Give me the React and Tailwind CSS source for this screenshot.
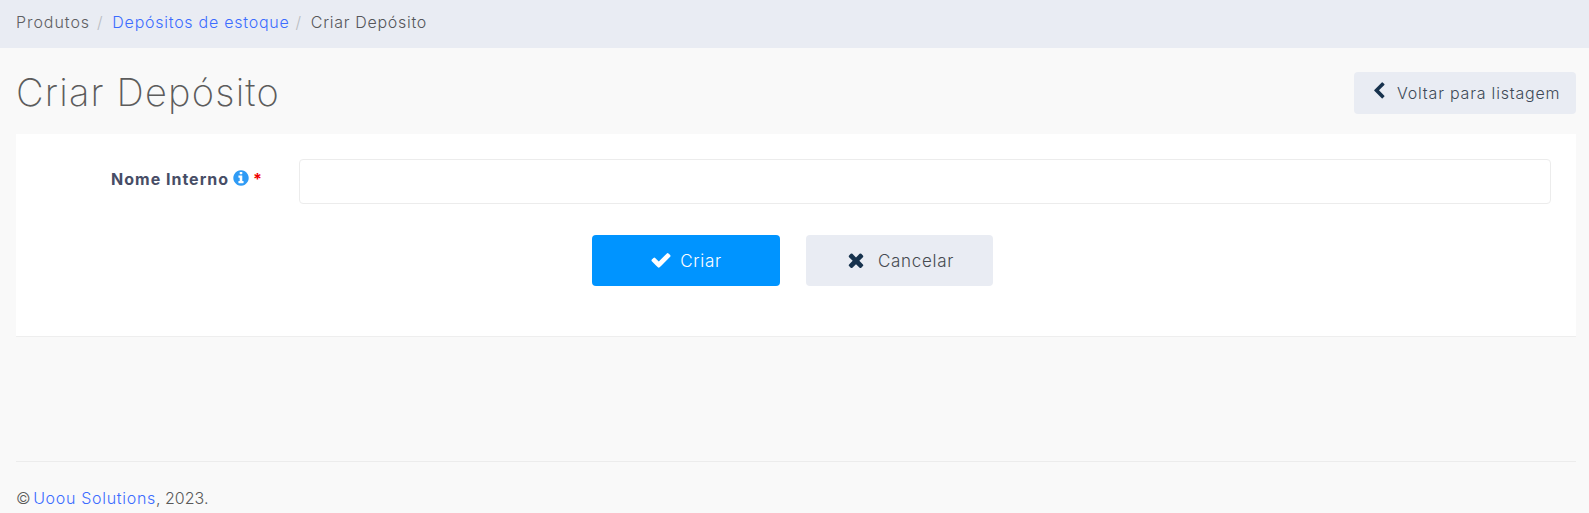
import React from "react";

// font awesome 4 glyphs, the newer sets in react-icons are drawn differently
const Fa4 = ({ d, className }) => (
    <svg viewBox="0 0 1792 1792" fill="currentColor" className={className}>
        <path d={d} />
    </svg>
);

const chevronLeft = "M1427 301l-531 531 531 531q19 19 19 45t-19 45l-166 166q-19 19-45 19t-45-19l-742-742q-19-19-19-45t19-45l742-742q19-19 45-19t45 19l166 166q19 19 19 45t-19 45z";
const check = "M1671 566q0 40-28 68l-724 724-136 136q-28 28-68 28t-68-28l-136-136-362-362q-28-28-28-68t28-68l136-136q28-28 68-28t68 28l294 295 656-657q28-28 68-28t68 28l136 136q28 28 28 68z";
const times = "M1490 1322q0 40-28 68l-136 136q-28 28-68 28t-68-28l-294-294-294 294q-28 28-68 28t-68-28l-136-136q-28-28-28-68t28-68l294-294-294-294q-28-28-28-68t28-68l136-136q28-28 68-28t68 28l294 294 294-294q28-28 68-28t68 28l136 136q28 28 28 68t-28 68l-294 294 294 294q28 28 28 68z";
const infoCircle = "M1152 1376v-160q0-14-9-23t-23-9h-96v-512q0-14-9-23t-23-9h-320q-14 0-23 9t-9 23v160q0 14 9 23t23 9h96v320h-96q-14 0-23 9t-9 23v160q0 14 9 23t23 9h448q14 0 23-9t9-23zm-128-896v-160q0-14-9-23t-23-9h-192q-14 0-23 9t-9 23v160q0 14 9 23t23 9h192q14 0 23-9t9-23zm640 416q0 209-103 385.5t-279.5 279.5-385.5 103-385.5-103-279.5-279.5-103-385.5 103-385.5 279.5-279.5 385.5-103 385.5 103 279.5 279.5 103 385.5z";

const App = () => {
    return (
        <div className="min-h-[513px] bg-[#f9f9f9] text-[#4a4a4a] font-['Inter','Liberation_Sans',sans-serif] overflow-hidden">
            <nav className="h-12 bg-[#e9ecf3] px-4 pb-[4px] flex items-center text-[16px] tracking-[0.7px] font-light">
                <span className="text-[#5f6063] tracking-[0.95px]">Produtos</span>
                <span className="text-[#b9bcc2] ml-[7px] mr-[9px]">/</span>
                <a href="#" className="text-[#3c6cff] tracking-[0.75px]">Depósitos de estoque</a>
                <span className="text-[#b9bcc2] ml-[6px] mr-[9px]">/</span>
                <span className="text-[#55565a]">Criar Depósito</span>
            </nav>

            <div className="pl-4 pr-[13px]">
                <div className="h-[86px] flex items-center justify-between">
                    <h1 className="mt-[2px] text-[38px] font-extralight text-[#5c5c5c] tracking-[1.2px]">Criar Depósito</h1>
                    <a href="#" className="mt-1 w-[222px] h-[42px] pb-[1px] bg-[#e9ecf3] rounded flex items-center pl-[16px] gap-[9px] text-[16px] tracking-[0.8px] font-light text-[#3d4a57]">
                        <Fa4 d={chevronLeft} className="mb-[3px] w-[18px] h-[18px] text-[#17324d]" />
                        Voltar para listagem
                    </a>
                </div>

                <div className="h-[203px] bg-white border-b border-[#eeeeee] pt-[25px] pl-[26px] pr-[25px]">
                    <div className="flex items-center">
                        <div className="w-[221px] mb-[6px] flex items-center justify-end text-[16px] tracking-[1px] font-bold text-[#474d66]">
                            <span>Nome Interno</span>
                            <Fa4 d={infoCircle} className="mb-[1px] ml-[3px] mr-[3px] w-[18px] h-[18px] text-[#2f9bf5]" />
                            <span className="text-[#f00000]">*</span>
                        </div>
                        <input type="text" className="ml-[36px] flex-1 h-[45px] bg-white border border-[#ececec] rounded" />
                    </div>
                    <div className="flex justify-center gap-[26px] mt-[31px] mr-[8px] text-[17px] tracking-[0.7px] font-light">
                        <button className="w-[188px] h-[51px] pt-[2px] bg-[#0094ff] text-white rounded flex items-center justify-center gap-[8px]">
                            <Fa4 d={check} className="mb-[3px] w-[22px] h-[22px]" />
                            Criar
                        </button>
                        <button className="w-[187px] h-[51px] pt-[2px] bg-[#e9ecf3] text-[#454a50] rounded flex items-center justify-center gap-[11px]">
                            <Fa4 d={times} className="mb-[3px] w-[22px] h-[22px] text-[#17324d]" />
                            Cancelar
                        </button>
                    </div>
                </div>

                <footer className="mt-[124px] border-t border-[#ececec] pt-[24px] text-[16px] font-light text-[#5a5a5a]">
                    © <a href="#" className="-ml-[2px] tracking-[0.7px] text-[#3c6cff]">Uoou Solutions</a>, 2023.
                </footer>
            </div>
        </div>
    );
};

export default App;
